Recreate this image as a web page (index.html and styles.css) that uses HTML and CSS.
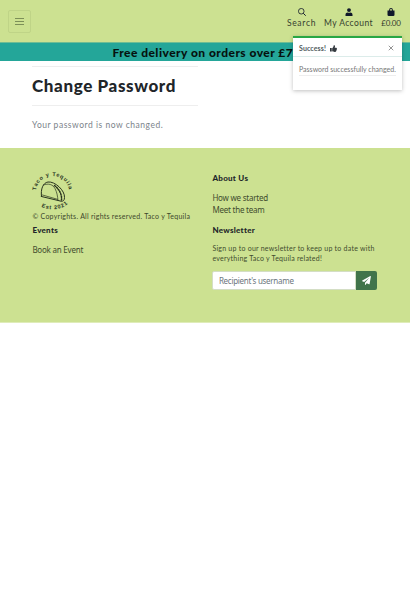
FILE: index.html
```html
<!DOCTYPE html>
<html lang="en">
<head>
<meta charset="utf-8">
<title>Taco y Tequila</title>
<link rel="stylesheet" href="styles.css">
</head>
<body>
<header class="topbar">
  <button class="menu" aria-label="Menu"><span></span><span></span><span></span></button>
  <nav class="actions">
    <a class="action search"><svg viewBox="0 0 16 16"><circle cx="6.5" cy="6.5" r="5.6" fill="none" stroke="currentColor" stroke-width="1.6"/><path d="M10.5 10.5l4.900 4.900" stroke="currentColor" stroke-width="2"/></svg><span>Search</span></a>
    <a class="action account"><svg viewBox="0 0 16 16"><circle cx="8" cy="4.2" r="3.9"/><path d="M1 16v-2.500c0-3 2-4.700 4.300-4.700 1.800.9 3.600.9 5.400 0 2.300 0 4.300 1.700 4.300 4.700V16z"/></svg><span>My Account</span></a>
    <a class="action bag"><svg viewBox="0 0 16 16"><path d="M1 5h3.200V4a3.800 3.800 0 0 1 7.600 0v1H15v8.500a2.500 2.500 0 0 1-2.500 2.500h-9A2.500 2.500 0 0 1 1 13.500zM6 5h4V4a2 2 0 0 0-4 0z"/></svg><span>£0.00</span></a>
  </nav>
</header>
<div class="banner"><span>Free delivery on orders over £75</span></div>
<main class="content">
  <hr>
  <h1><span>Change Password</span></h1>
  <hr>
  <p>Your password is now changed.</p>
</main>
<footer class="footer">
  <section class="col">
    <svg class="logo" viewBox="0 0 42 42">
      <defs>
        <path id="top-arc" d="M4 20.500a16.500 15.500 0 0 1 33 0"/>
        <path id="bottom-arc" d="M2 29a20 15 0 0 0 37 0"/>
      </defs>
      <text><textPath href="#top-arc" startOffset="1" textLength="47">Taco y Tequila</textPath></text>
      <text><textPath href="#bottom-arc" startOffset="10" textLength="28">Est 2021</textPath></text>
      <g fill="none" stroke="currentColor" stroke-linecap="round" stroke-linejoin="round">
        <path stroke-width="1" d="M9.500 25.500C8.500 18 11 11.800 16 11c7-.8 17 8.500 16.500 15.500 0 3-1.500 4-3.500 3.700L9.500 25.500z"/>
        <path stroke-width=".7" d="M11.500 14c5-2 9.500-.5 11.500 3.500 2 4 2.500 7 3 12M10.500 24l15 4.300"/>
        <path stroke-width="1.500" stroke-dasharray="1.200 1.400" d="M22.500 14.500c5 4 7.500 9 7 14.500"/>
      </g>
    </svg>
    <p class="copy">© Copyrights. All rights reserved. Taco y Tequila</p>
    <h2 class="events">Events</h2>
    <a class="link book">Book an Event</a>
  </section>
  <section class="col">
    <h2 class="about">About Us</h2>
    <a class="link started">How we started</a>
    <a class="link team">Meet the team</a>
    <h2 class="news">Newsletter</h2>
    <p class="signup">Sign up to our newsletter to keep up to date with<br>everything Taco y Tequila related!</p>
    <form class="subscribe">
      <div class="field">Recipient's username</div>
      <button type="button" aria-label="Subscribe"><svg viewBox="0 0 16 16"><path d="M15.800.8L13.500 14.200q-.2.800-1 .5L8.300 13 6.500 15.500q-.8.900-1.200-.2v-3.400L13 3 3.800 10.800.6 9.500q-1-.6 0-1.300L14.800.1q1-.3 1 .7z"/></svg></button>
    </form>
  </section>
</footer>
<aside class="toast">
  <div class="toast-head"><strong>Success!</strong><svg class="thumb" viewBox="0 0 16 16"><path d="M0 7h4v8H0zM5 7.500C8 5 8 3 8.400 1.200 9 0 11.500.6 11.500 3c0 1.300-.5 2-.8 3H14c2 0 2.500 2 1.300 3 .7 1 .4 2-.4 2.500.4 1-.1 1.700-.7 2 .2 1.500-.7 2.300-2.200 2.300-4 .2-4.500-.8-7-1.300z"/></svg><svg class="close" viewBox="0 0 8 8"><path d="M1 1l6 6M7 1L1 7"/></svg></div>
  <div class="toast-body"><p>Password successfully changed.</p></div>
</aside>
</body>
</html>
```
FILE: styles.css
```css
* { box-sizing: border-box; }
body { margin: 0; position: relative; background: #fff; color: #212529; font: 8px/12px Lato, sans-serif; }
h1, h2, p { margin: 0; }
svg { fill: currentColor; }
.topbar { height: 42px; background: #cce191; display: flex; justify-content: space-between; padding: 0 9px 0 8px; }
.menu { width: 23px; height: 23px; margin-top: 10px; padding: 0; border: 1px solid #bfd487; border-radius: 2px; background: none; display: flex; flex-direction: column; gap: 2px; align-items: center; justify-content: center; }
.menu span { width: 9px; height: 1px; background: #7c8f58; }
.actions { display: flex; gap: 8px; padding-top: 8px; color: #10182a; }
.action { display: flex; flex-direction: column; align-items: center; font: 8.5px/11px Lato, sans-serif; white-space: nowrap; }
.action span { color: #36402f; }
.action svg { width: 8px; height: 8px; margin-bottom: 2px; }
.search { width: 29px; letter-spacing: .7px; }
.account { width: 49px; letter-spacing: .42px; }
.bag { width: 20px; font-size: 8px; letter-spacing: -.2px; }
.banner { height: 19px; background: #24a699; border-top: 1px solid #6fbd94; color: #06120f; text-align: center; font: 900 12px/20px Lato, sans-serif; white-space: nowrap; overflow: hidden; letter-spacing: .47px; padding-left: 3px; }
.content { height: 87px; padding: 5px 32px 0; }
.content hr { width: 166px; height: 1px; margin: 0; border: 0; background: #eeeeee; }
h1 { height: 38px; font: 900 17px/38px Lato, sans-serif; white-space: nowrap; letter-spacing: .62px; }
.content p { color: #7b838a; font: 8.500px/12px Lato, sans-serif; margin-top: 13px; letter-spacing: .52px; }
.footer { height: 175px; background: #cce191; border-bottom: 1px solid #dfecb9; padding: 22px 32px 0; display: grid; grid-template-columns: 180px 166px; }
.col { display: flex; flex-direction: column; align-items: flex-start; white-space: nowrap; padding-left: .4px; }
.logo { width: 42px; height: 42px; margin-top: 1px; color: #29331f; overflow: visible; }
.logo text { font: 700 5.500px "Liberation Sans", sans-serif; }
.copy { font: 7px/10px Lato, sans-serif; color: #3e482c; letter-spacing: .26px; margin-top: -2px; }
h2 { font: 900 8px/12px Lato, sans-serif; letter-spacing: .28px; }
.events { margin-top: 3px; }
.link { font: 8px/12px "Noto Sans", sans-serif; color: #414c2e; letter-spacing: -.22px; }
.book { margin-top: 8px; }
.about { margin-top: 2px; }
.started { margin-top: 8px; }
.news { margin-top: 8px; }
.signup { margin-top: 7px; font: 7px/10px Lato, sans-serif; color: #414c2e; letter-spacing: .24px; }
.subscribe { display: flex; margin-top: 8px; width: 165px; height: 19px; }
.field { flex: 1; background: #fff; border: 1px solid #d4dec5; border-radius: 2px 0 0 2px; color: #6c757d; font: 8px/17px "Noto Sans", sans-serif; letter-spacing: -.28px; padding-left: 5.500px; }
.subscribe button { width: 21px; padding: 0; border: 0; border-radius: 0 2px 2px 0; background: #41744b; color: #fff; display: flex; align-items: center; justify-content: center; }
.subscribe svg { width: 9px; height: 9px; }
.toast { position: absolute; left: 293px; top: 36px; width: 109px; height: 54px; border-top: 2px solid #28a745; background: #fff; box-shadow: 0 1px 4px #00000040; color: #62686c; white-space: nowrap; }
.toast-head { height: 19px; display: flex; align-items: center; padding: 2px 8px 0 6px; border-bottom: 1px solid #dcecea; }
.toast strong { font: 700 7px/12px Lato, sans-serif; color: #515a5d; letter-spacing: .1px; }
.thumb { width: 7px; height: 7px; margin-left: 4px; color: #343a40; }
.close { width: 6px; height: 6px; margin-left: auto; fill: none; stroke: #888; stroke-width: 1.200; }
.toast-body { padding: 5px 6px 0; }
.toast-body p { height: 14px; border-bottom: 1px solid #eee; font: 7px/14px Lato, sans-serif; color: #777; }
```
